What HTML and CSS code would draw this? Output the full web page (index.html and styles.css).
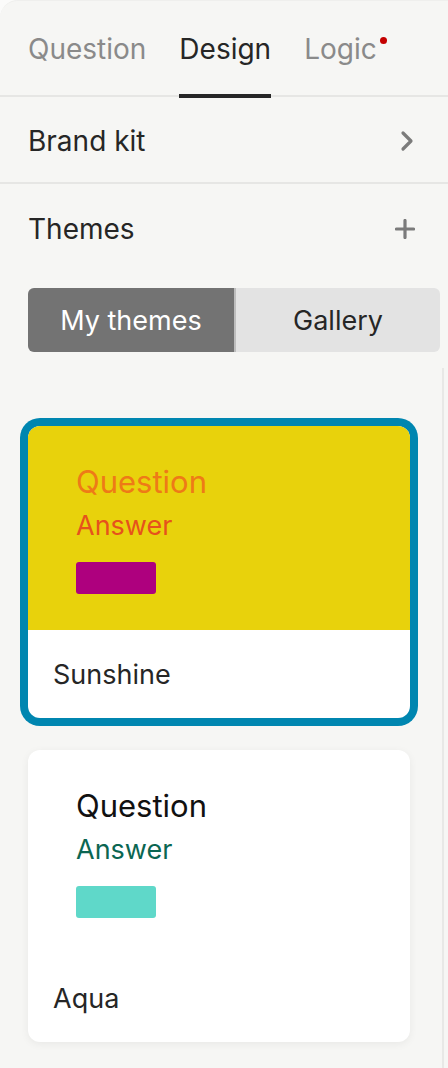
FILE: index.html
```html
<!DOCTYPE html>
<html lang="en">
<head>
  <meta charset="UTF-8">
  <title>Design</title>
  <link rel="stylesheet" href="styles.css">
</head>
<body>

<div class="panel">

  <!--tabs-->
  <div class="tabs">
    <a class="tab" href="#">Question</a>
    <a class="tab active" href="#">Design</a>
    <a class="tab dot" href="#">Logic</a>
  </div>

  <div class="row line">
    <span>Brand kit</span>
    <svg class="chevron" width="14" height="22" viewBox="0 0 14 22">
      <path d="M3 3l8 8-8 8" fill="none" stroke="#7b7b7b" stroke-width="3.2" stroke-linecap="round" stroke-linejoin="round"/>
    </svg>
  </div>

  <div class="row">
    <span>Themes</span>
    <svg class="plus" width="20" height="20" viewBox="0 0 20 20">
      <path d="M10 1.5v17M1.5 10h17" fill="none" stroke="#7b7b7b" stroke-width="3.2" stroke-linecap="round"/>
    </svg>
  </div>

  <!--切换-->
  <div class="switch">
    <a class="on" href="#">My themes</a>
    <a href="#">Gallery</a>
  </div>

  <!--主题列表-->
  <div class="list">
    <div class="card selected">
      <div class="preview sunshine">
        <p class="q">Question</p>
        <p class="a">Answer</p>
        <span class="btn"></span>
      </div>
      <div class="name">Sunshine</div>
    </div>

    <div class="card">
      <div class="preview aqua">
        <p class="q">Question</p>
        <p class="a">Answer</p>
        <span class="btn"></span>
      </div>
      <div class="name">Aqua</div>
    </div>
  </div>
</div>

</body>
</html>
```

FILE: styles.css
```css
* {
  margin: 0;
  padding: 0;
  box-sizing: border-box;
}

body {
  background-color: #fbfbfa;
  font-family: Inter, "Noto Sans", sans-serif;
  color: #262626;
}

a {
  text-decoration: none;
  color: inherit;
}

/*整个面板，左上角圆角*/
.panel {
  min-height: 100vh;
  background-color: #f6f6f4;
  border-top-left-radius: 18px;
  border-top: 1px solid #efefed;
  overflow: hidden;
}

.tabs {
  display: flex;
  gap: 33px;
  height: 96px;
  padding: 0 28px;
  border-bottom: 2px solid #e6e6e4;
}

.tab {
  display: flex;
  align-items: center;
  padding-top: 2px;
  font-size: 28px;
  color: #8a8a8a;
  border-bottom: 4px solid transparent;
  margin-bottom: -3px;
  position: relative;
}

.tab.active {
  color: #262626;
  border-bottom-color: #262626;
}

/*Logic右上角小红点*/
.tab.dot::after {
  content: "";
  position: absolute;
  right: -10px;
  top: 36px;
  width: 7px;
  height: 7px;
  border-radius: 50%;
  background-color: #c40000;
}

.row {
  display: flex;
  justify-content: space-between;
  align-items: center;
  height: 87px;
  padding: 3px 33px 0 28px;
  font-size: 28px;
}

.row.line {
  border-bottom: 2px solid #e6e6e4;
  padding-right: 34px;
}

.switch {
  display: flex;
  height: 64px;
  margin: 17px 8px 0 28px;
  border-radius: 6px;
  overflow: hidden;
  background-color: #e3e3e3;
}

.switch a {
  flex: 1;
  display: flex;
  align-items: center;
  justify-content: center;
  font-size: 27px;
}

.switch a.on {
  flex: 0 0 208px;
  background-color: #737373;
  color: #fff;
  border-right: 2px solid #bdbdbd;
}

/*右边那条竖线是滚动条*/
.list {
  margin-top: 16px;
  margin-right: 4px;
  padding: 58px 32px 40px 28px;
  border-right: 2px solid #e8e8e6;
  min-height: 700px;
}

.card {
  height: 292px;
  background-color: #fff;
  border-radius: 12px;
  overflow: hidden;
  margin-bottom: 32px;
  box-shadow: 0 2px 8px rgba(0, 0, 0, .06);
}

.card.selected {
  overflow: visible;
  box-shadow: 0 0 0 8px #0086b0;
}

.preview {
  height: 204px;
  padding: 36px 0 0 48px;
  border-radius: 12px 12px 0 0;
}

.preview .q {
  font-size: 31px;
  line-height: 40px;
}

.preview .a {
  font-size: 27px;
  line-height: 36px;
  margin-top: 6px;
}

.preview .btn {
  display: block;
  width: 80px;
  height: 32px;
  margin-top: 18px;
  border-radius: 3px;
}

.sunshine {
  background-color: #e8d20c;
}

.sunshine .q {
  color: #ee7a17;
}

.sunshine .a {
  color: #e6521c;
}

.sunshine .btn {
  background-color: #ae007e;
}

.aqua .q {
  color: #111;
}

.aqua .a {
  color: #0b6652;
}

.aqua .btn {
  background-color: #5fd8c9;
}

.name {
  height: 88px;
  display: flex;
  align-items: center;
  padding-left: 25px;
  font-size: 27px;
}
```
